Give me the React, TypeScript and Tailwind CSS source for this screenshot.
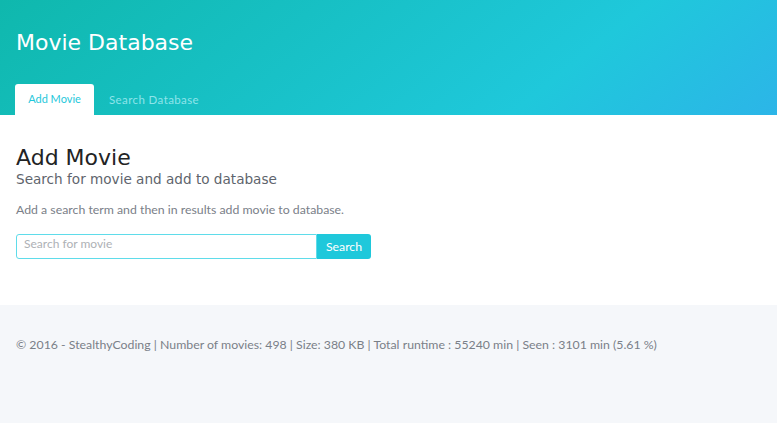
import React from "react";

export default function App() {
  const small = { fontFamily: "Lato, 'Open Sans', sans-serif" };
  return (
    <div className="min-h-[423px] bg-[#f5f7fa] flex flex-col" style={{ fontFamily: "'DejaVu Sans', sans-serif" }}>
      <section className="bg-[linear-gradient(141deg,#0fb8ad_0%,#1fc8db_71%,#2cb5e8_100%)] pt-[30px] px-[16px]">
        <h1 className="text-white text-[22px] leading-[26px] mb-[28px]">Movie Database</h1>
        <nav className="flex items-end text-[11px]" style={small}>
          <a className="bg-white text-[#1fc8db] rounded-t-[3px] h-[31px] w-[79px] flex items-center justify-center ml-[-1px]">Add Movie</a>
          <a className="text-[#8ee4ea] h-[31px] px-[15px] flex items-center text-[11.5px] tracking-[0.4px]">Search Database</a>
        </nav>
      </section>
      <section className="bg-white px-[16px] pt-[31px] pb-[46px]">
        <h2 className="text-[#222324] text-[22px] leading-[24px]">Add Movie</h2>
        <h3 className="text-[#5e646c] text-[13.6px] leading-[20px] mt-[-1px]">Search for movie and add to database</h3>
        <p className="text-[#7a8088] text-[12.3px] mt-[12px]" style={small}>Add a search term and then in results add movie to database.</p>
        <div className="flex mt-[15px] w-[355px] h-[25px]">
          <input
            placeholder="Search for movie"
            className="flex-1 border border-[#5fdcea] rounded-l-[3px] px-[7px] text-[12px] text-[#222] placeholder:text-[#aeb1b5] outline-none pb-[5px]"
            style={small}
          />
          <button className="bg-[#1fc8db] text-white text-[12.3px] w-[54px] rounded-r-[3px]" style={small}>Search</button>
        </div>
      </section>
      <footer className="px-[16px] pt-[31px] text-[#7a8088] text-[12.3px]" style={small}>
        © 2016 - StealthyCoding | Number of movies: 498 | Size: 380 KB | Total runtime : 55240 min | Seen : 3101 min (5.61 %)
      </footer>
    </div>
  );
}
